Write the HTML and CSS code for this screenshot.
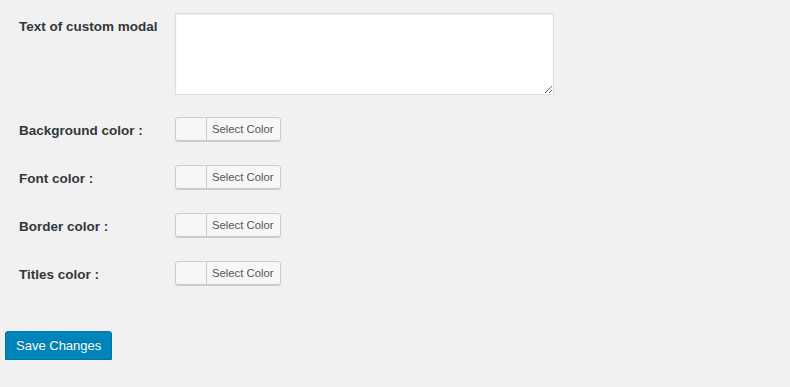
FILE: index.html
```html
<!DOCTYPE html>
<html lang="en">
<head>
    <meta charset="UTF-8">
    <meta name="viewport" content="width=device-width, initial-scale=1.0">
    <title>Modal settings</title>
    <link rel="stylesheet" href="styles.css">
</head>
<body>
    <form class="settings">
        <div class="form-table">
            <label class="field-label top" for="modal-text">Text of custom modal</label>
            <textarea id="modal-text" class="modal-text"></textarea>

            <label class="field-label">Background color :</label>
            <button type="button" class="color-picker"><span class="swatch"></span><span class="picker-text">Select Color</span></button>

            <label class="field-label">Font color :</label>
            <button type="button" class="color-picker"><span class="swatch"></span><span class="picker-text">Select Color</span></button>

            <label class="field-label">Border color :</label>
            <button type="button" class="color-picker"><span class="swatch"></span><span class="picker-text">Select Color</span></button>

            <label class="field-label">Titles color :</label>
            <button type="button" class="color-picker"><span class="swatch"></span><span class="picker-text">Select Color</span></button>
        </div>

        <p class="submit">
            <button type="submit" class="button-primary">Save Changes</button>
        </p>
    </form>
</body>
</html>
```

FILE: styles.css
```css
body {
    margin: 0;
    background-color: #f1f1f1;
    color: #32373c;
    font-family: "Liberation Sans", Arial, sans-serif;
    font-size: 14px;
}

.settings {
    padding: 13px 0 0 5px;
}

.form-table {
    display: grid;
    grid-template-columns: 156px auto;
    row-gap: 24px;
    align-items: center;
    justify-items: start;
    padding-left: 14px;
}

.field-label {
    padding-top: 3px;
    font-size: 13.5px;
    font-weight: bold;
    line-height: 18px;
}

.field-label.top {
    align-self: start;
    padding-top: 5px;
}

.modal-text {
    display: block;
    width: 379px;
    height: 82px;
    box-sizing: border-box;
    margin: 0 0 -2px;
    background: #fff;
    border: 1px solid #ddd;
    box-shadow: inset 0 1px 2px rgba(0, 0, 0, 0.07);
    resize: vertical;
}

.color-picker {
    display: flex;
    align-items: stretch;
    height: 24px;
    padding: 0;
    box-sizing: border-box;
    background: #f7f7f7;
    border: 1px solid #ccc;
    border-radius: 3px;
    box-shadow: 0 1px 0 #ccc;
    cursor: pointer;
    font-family: "Liberation Sans", Arial, sans-serif;
}

.swatch {
    width: 30px;
    border-right: 1px solid #ccc;
}

.picker-text {
    padding: 0 6px 0 5px;
    font-size: 11.3px;
    line-height: 22px;
    color: #555;
}

.submit {
    margin: 46px 0 0;
}

.button-primary {
    height: 29px;
    padding: 0 10px;
    background: #0085ba;
    border: 1px solid #0073aa;
    border-radius: 3px;
    box-shadow: 0 1px 0 #006799;
    color: #fff;
    font-family: "Liberation Sans", Arial, sans-serif;
    font-size: 13px;
    text-shadow: 0 -1px 1px #006799;
    cursor: pointer;
}
```
